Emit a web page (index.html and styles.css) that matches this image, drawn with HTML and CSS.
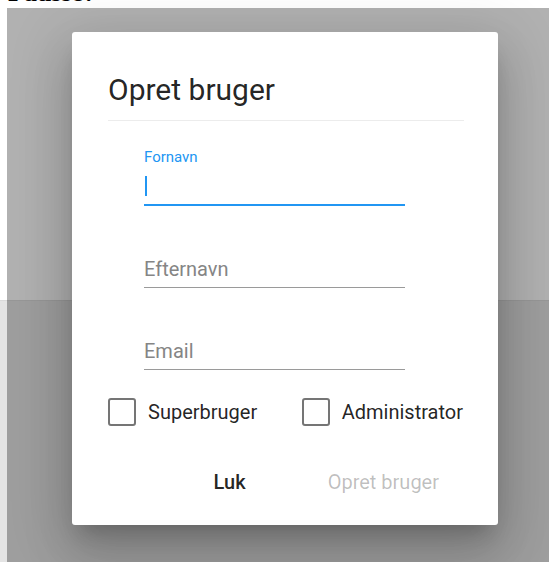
FILE: index.html
```html
<!DOCTYPE html>
<html lang="da">
<head>
<meta charset="utf-8">
<title>Opret bruger</title>
<link rel="stylesheet" href="styles.css">
</head>
<body>
  <div class="page">
    <h1 class="page-title">Pausse?</h1>
    <div class="page-top"></div>
    <div class="page-band"></div>
  </div>

  <div class="backdrop">
    <div class="dialog" role="dialog" aria-labelledby="dlg-title">
      <h2 class="dialog-title" id="dlg-title">Opret bruger</h2>
      <div class="dialog-body">
        <div class="field focused">
          <div class="field-label">Fornavn</div>
          <div class="field-input"><span class="caret"></span></div>
          <div class="field-line"></div>
        </div>
        <div class="field">
          <div class="field-label"></div>
          <div class="field-input placeholder">Efternavn</div>
          <div class="field-line"></div>
        </div>
        <div class="field">
          <div class="field-label"></div>
          <div class="field-input placeholder">Email</div>
          <div class="field-line"></div>
        </div>

        <div class="checks">
          <label class="check"><span class="box"></span><span class="check-text">Superbruger</span></label>
          <label class="check"><span class="box"></span><span class="check-text">Administrator</span></label>
        </div>
      </div>
      <div class="dialog-actions">
        <button class="btn">Luk</button>
        <button class="btn" disabled>Opret bruger</button>
      </div>
    </div>
  </div>
</body>
</html>
```

FILE: styles.css
```css
html, body {
  margin: 0;
  padding: 0;
  height: 100%;
  overflow: hidden;
  background: #fff;
}

body {
  font-family: Roboto, "Liberation Sans", sans-serif;
  position: relative;
}

/* page underneath the modal */
.page-title {
  margin: -23px 0 0 8px;
  font-family: "Liberation Serif", serif;
  font-size: 26px;
  font-weight: 700;
  line-height: 31px;
  color: #000;
}

.page-top {
  height: 292px;
}

.page-band {
  height: 261px;
  background: #e4e4e4;
  border-top: 1px solid #dadada;
}

/* modal overlay */
.backdrop {
  position: absolute;
  left: 7px;
  top: 8px;
  right: 0;
  bottom: 0;
  background: rgba(0, 0, 0, 0.305);
  padding: 24px 0 0 65px;
}

.dialog {
  width: 426px;
  box-sizing: border-box;
  background: #fff;
  border-radius: 3px;
  padding: 38px 34px 20px 36px;
  box-shadow:
    0 14px 19px -9px rgba(0, 0, 0, 0.2),
    0 30px 48px 4px rgba(0, 0, 0, 0.14),
    0 11px 58px 10px rgba(0, 0, 0, 0.12);
}

.dialog-title {
  margin: 0;
  padding-bottom: 10px;
  border-bottom: 1px solid #ececec;
  font-size: 30px;
  font-weight: 400;
  line-height: 40px;
  color: rgba(0, 0, 0, 0.87);
}

.dialog-body {
  padding-top: 27px;
}

/* text fields */
.field {
  width: 261px;
  margin-left: 36px;
  margin-bottom: 25px;
}

.field-label {
  height: 18px;
  font-size: 15px;
  line-height: 18px;
  color: #2196f3;
  margin-bottom: 8px;
}

.field-input {
  height: 24px;
  font-size: 20px;
  line-height: 24px;
  color: rgba(0, 0, 0, 0.87);
  margin-bottom: 6px;
  display: flex;
  align-items: center;
}

.field-input.placeholder {
  color: #858585;
}

.caret {
  width: 2px;
  height: 20px;
  margin-left: 1px;
  background: #2196f3;
}

.field-line {
  height: 1px;
  background: #9a9a9a;
}

.field.focused .field-line {
  height: 2px;
  background: #2196f3;
}

/* checkboxes */
.checks {
  display: flex;
  justify-content: space-between;
  margin-top: 28px;
  padding-right: 1px;
}

.check {
  display: flex;
  align-items: center;
  gap: 12px;
  font-size: 20px;
  line-height: 28px;
  color: rgba(0, 0, 0, 0.87);
}

.box {
  width: 28px;
  height: 28px;
  box-sizing: border-box;
  border: 2.5px solid #757575;
  border-radius: 3px;
}

/* actions */
.dialog-actions {
  display: flex;
  justify-content: flex-end;
  gap: 34px;
  margin-top: 34px;
  padding-right: 1px;
}

.btn {
  font-family: Roboto, "Liberation Sans", sans-serif;
  font-size: 20px;
  line-height: 45px;
  height: 45px;
  padding: 0 24px;
  border: 0;
  background: transparent;
  color: rgba(0, 0, 0, 0.87);
  font-weight: 500;
}

.btn:disabled {
  color: rgba(0, 0, 0, 0.26);
  font-weight: 400;
}
```
